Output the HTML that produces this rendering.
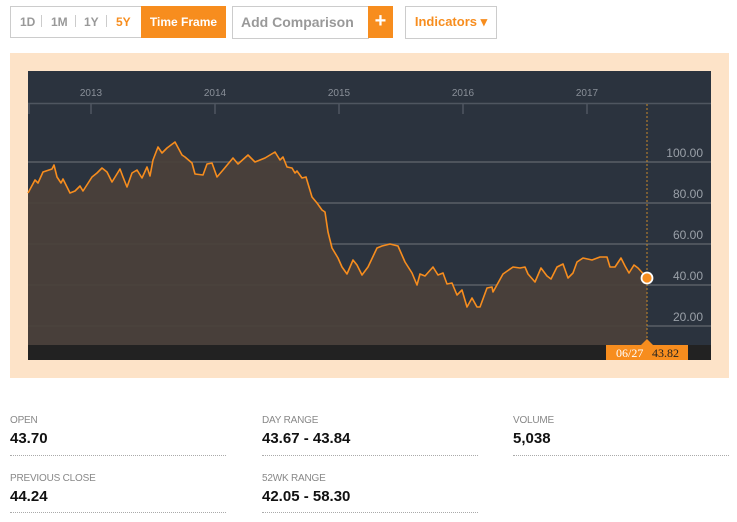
<!DOCTYPE html>
<html><head><meta charset="utf-8"><style>
body{margin:0;width:737px;height:522px;background:#fff;font-family:"Liberation Sans",Arial,sans-serif;position:relative;overflow:hidden}
.a{position:absolute}
.lbl{font-size:10px;color:#888;letter-spacing:-0.2px}
.val{font-size:15px;font-weight:bold;color:#111}
.ln{border-top:1px dotted #aaa;width:216px;height:0}
</style></head><body>
<div class="a" style="left:10px;top:6px;width:130px;height:30px;border:1px solid #ccc"></div>
<div class="a" style="left:20px;top:15px;font-size:12px;font-weight:bold;color:#999">1D</div>
<div class="a" style="left:41px;top:15px;width:1px;height:12px;background:#ccc"></div>
<div class="a" style="left:51px;top:15px;font-size:12px;font-weight:bold;color:#999">1M</div>
<div class="a" style="left:75px;top:15px;width:1px;height:12px;background:#ccc"></div>
<div class="a" style="left:84px;top:15px;font-size:12px;font-weight:bold;color:#999">1Y</div>
<div class="a" style="left:106px;top:15px;width:1px;height:12px;background:#ccc"></div>
<div class="a" style="left:116px;top:15px;font-size:12px;font-weight:bold;color:#f78d1e">5Y</div>
<div class="a" style="left:141px;top:6px;width:85px;height:32px;background:#f78d1e;color:#fff;font-size:12px;font-weight:bold;line-height:32px;text-align:center">Time Frame</div>
<div class="a" style="left:232px;top:6px;width:135px;height:31px;border:1px solid #ccc;color:#999;font-size:14px;font-weight:bold;line-height:31px;text-indent:8px">Add Comparison</div>
<div class="a" style="left:368px;top:6px;width:25px;height:32px;background:#f78d1e;color:#fff;font-size:20px;font-weight:bold;line-height:31px;text-align:center">+</div>
<div class="a" style="left:405px;top:6px;width:90px;height:31px;border:1px solid #ccc;color:#f78d1e;font-size:13px;font-weight:bold;line-height:29px;text-align:center">Indicators ▾</div>
<div class="a" style="left:10px;top:53px;width:719px;height:325px;background:#fde3c8"></div>
<svg class="a" style="left:0;top:0" width="737" height="400">
<rect x="28" y="71" width="683" height="289" fill="#2b333e"/>
<g fill="#8a9099" font-size="10" text-anchor="middle" font-family="Liberation Sans,sans-serif">
<text x="91" y="96">2013</text><text x="215" y="96">2014</text><text x="339" y="96">2015</text><text x="463" y="96">2016</text><text x="587" y="96">2017</text></g>
<g stroke="#4f5660" stroke-width="1.5"><line x1="28" y1="103.5" x2="711" y2="103.5"/>
<line x1="29" y1="103" x2="29" y2="114"/><line x1="91" y1="103" x2="91" y2="114"/><line x1="215" y1="103" x2="215" y2="114"/><line x1="339" y1="103" x2="339" y2="114"/><line x1="463" y1="103" x2="463" y2="114"/><line x1="587" y1="103" x2="587" y2="114"/></g>
<g stroke-width="1.5"><g stroke="#5a5f66"><line x1="28" y1="162" x2="711" y2="162"/><line x1="28" y1="203" x2="711" y2="203"/><line x1="28" y1="244" x2="711" y2="244"/><line x1="28" y1="285" x2="711" y2="285"/><line x1="28" y1="326" x2="711" y2="326"/></g></g>
<polygon fill="#4a413a" fill-opacity="0.93" points="28,345 28,193 35,180 38,183 43,172 52,169 54,165 57,177 61,183 63,179 70,193 75,191 80,186 83,191 92,177 97,173 102,168 107,172 112,182 120,169 123,177 127,187 132,173 137,170 142,178 147,167 150,176 153,160 158,147 162,153 167,148 175,142 182,155 185,157 192,163 195,174 203,175 207,164 212,163 217,177 223,170 233,158 238,164 248,155 255,162 260,160 265,158 270,155 275,152 280,160 283,157 287,167 292,168 295,173 297,171 302,178 306,177 312,197 317,203 322,210 325,212 328,232 332,248 338,258 342,267 347,274 353,260 357,265 362,275 368,267 377,248 382,246 390,244 398,246 405,262 412,273 417,285 420,274 425,276 433,267 438,275 443,273 447,284 452,283 457,295 462,290 467,307 472,298 477,307 480,307 487,288 492,287 493,292 503,274 513,267 520,268 525,267 528,274 535,282 541,268 547,276 551,279 557,267 563,264 568,278 573,273 577,262 583,258 592,260 600,257 607,257 610,267 615,267 621,258 625,266 629,273 634,265 638,268 647,278 647,345"/>
<g fill="#9aa0a8" font-size="12" text-anchor="end" font-family="Liberation Sans,sans-serif">
<text x="703" y="157">100.00</text><text x="703" y="198">80.00</text><text x="703" y="239">60.00</text><text x="703" y="280">40.00</text><text x="703" y="321">20.00</text></g>
<polyline fill="none" stroke="#f78d1e" stroke-width="1.6" stroke-linejoin="round" points="28,193 35,180 38,183 43,172 52,169 54,165 57,177 61,183 63,179 70,193 75,191 80,186 83,191 92,177 97,173 102,168 107,172 112,182 120,169 123,177 127,187 132,173 137,170 142,178 147,167 150,176 153,160 158,147 162,153 167,148 175,142 182,155 185,157 192,163 195,174 203,175 207,164 212,163 217,177 223,170 233,158 238,164 248,155 255,162 260,160 265,158 270,155 275,152 280,160 283,157 287,167 292,168 295,173 297,171 302,178 306,177 312,197 317,203 322,210 325,212 328,232 332,248 338,258 342,267 347,274 353,260 357,265 362,275 368,267 377,248 382,246 390,244 398,246 405,262 412,273 417,285 420,274 425,276 433,267 438,275 443,273 447,284 452,283 457,295 462,290 467,307 472,298 477,307 480,307 487,288 492,287 493,292 503,274 513,267 520,268 525,267 528,274 535,282 541,268 547,276 551,279 557,267 563,264 568,278 573,273 577,262 583,258 592,260 600,257 607,257 610,267 615,267 621,258 625,266 629,273 634,265 638,268 647,278"/>
<line x1="647" y1="104" x2="647" y2="345" stroke="#c88a2a" stroke-width="1" stroke-dasharray="2,2"/>
<rect x="28" y="345" width="683" height="15" fill="#222"/>
<rect x="606" y="345" width="82" height="15" fill="#f78d1e"/>
<polygon points="641,345 647,339 653,345" fill="#f78d1e"/>
<text x="616" y="357" fill="#fff" font-size="12" font-family="Liberation Serif,serif">06/27</text>
<text x="652" y="357" fill="#222" font-size="12" font-family="Liberation Serif,serif">43.82</text>
<circle cx="647" cy="278" r="5.5" fill="#f78d1e" stroke="#fff" stroke-width="1.8"/>
</svg>
<div class="a lbl" style="left:10px;top:415px">OPEN</div>
<div class="a val" style="left:10px;top:430px">43.70</div>
<div class="a ln" style="left:10px;top:455px"></div>
<div class="a lbl" style="left:262px;top:415px">DAY RANGE</div>
<div class="a val" style="left:262px;top:430px">43.67 - 43.84</div>
<div class="a ln" style="left:262px;top:455px"></div>
<div class="a lbl" style="left:513px;top:415px">VOLUME</div>
<div class="a val" style="left:513px;top:430px">5,038</div>
<div class="a ln" style="left:513px;top:455px"></div>
<div class="a lbl" style="left:10px;top:473px">PREVIOUS CLOSE</div>
<div class="a val" style="left:10px;top:488px">44.24</div>
<div class="a ln" style="left:10px;top:512px"></div>
<div class="a lbl" style="left:262px;top:473px">52WK RANGE</div>
<div class="a val" style="left:262px;top:488px">42.05 - 58.30</div>
<div class="a ln" style="left:262px;top:512px"></div>
</body></html>
